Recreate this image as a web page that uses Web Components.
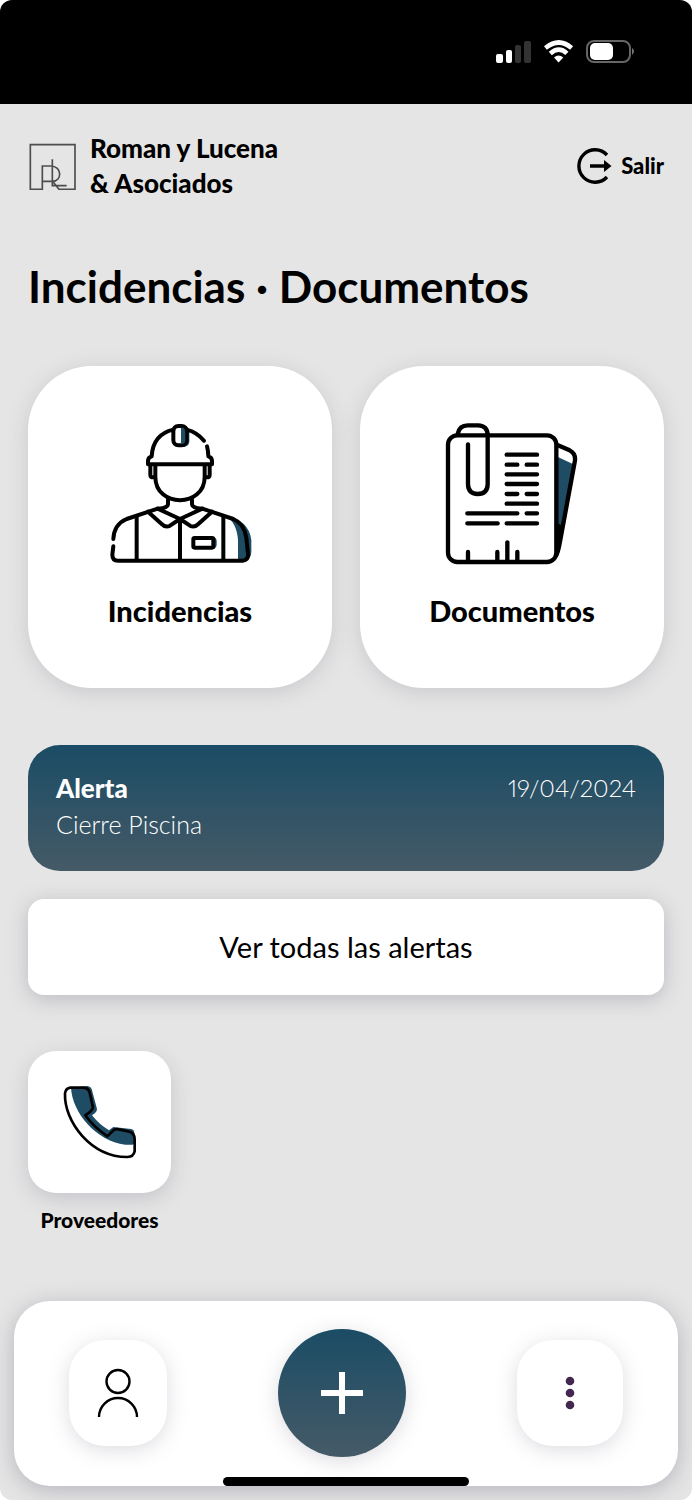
<!DOCTYPE html>
<html lang="es">
<head>
<meta charset="utf-8">
<meta name="viewport" content="width=device-width, initial-scale=1">
<title>Roman y Lucena &amp; Asociados</title>
<style>
  body { margin: 0; background: #fff; color: #000; font-family: Lato, "Open Sans", sans-serif; }
</style>
</head>
<body>
<app-screen>
  <status-bar slot="status"></status-bar>
  <brand-header>Roman y Lucena<br>&amp; Asociados</brand-header>
  <page-title>Incidencias · Documentos</page-title>
  <card-grid>
    <feature-card icon="worker">Incidencias</feature-card>
    <feature-card icon="papers">Documentos</feature-card>
  </card-grid>
  <alert-banner>
    <span slot="title">Alerta</span>
    <span slot="date">19/04/2024</span>
    <span slot="text">Cierre Piscina</span>
  </alert-banner>
  <wide-button>Ver todas las alertas</wide-button>
  <shortcut-tile>Proveedores</shortcut-tile>
  <bottom-nav slot="nav"></bottom-nav>
</app-screen>

<script>
const icons = {
  worker: `<svg viewBox="51 36 438 432" width="146" height="144" fill="none" stroke="#000" stroke-width="12" stroke-linecap="round" stroke-linejoin="round" aria-hidden="true">
    <path d="M403 315Q440 335 444 390V448H468Q484 445 484 425V390Q477 330 403 315Z" fill="#1d4c64" stroke="none"/>
    <path d="M270 49H284Q298 51 298 65V94Q298 108 284 110H270Z" fill="#1d4c64" stroke="none"/>
    <rect x="250" y="48" width="40" height="58" rx="15" fill="#fff"/>
    <path d="M273 53H280Q286 57 286 66V90Q286 99 278 102H273Z" fill="#1d4c64" stroke="none"/>
    <path d="M250 59Q189 73 185 139Q174 142 174 153V163H366V153Q366 142 355 139Q355 124 351 109M290 59Q321 67 342 92"/>
    <path d="M181 166V194Q181 202 190 202H196M359 166V194Q359 202 350 202H344M196 166V200C196 294 344 294 344 200V166"/>
    <path d="M234 269V283Q233 291 217 295L203 296L110 327Q72 343 70 387M70 409L67 434Q67 452 84 452H458Q476 450 474 432L469 384Q463 341 430 327L337 296L323 295Q307 291 306 283V269"/>
    <path d="M174 305L215 342Q227 354 240 347L270 327L203 296M366 305L325 342Q313 354 300 347L270 327L337 296M270 330V450M140 322V450M400 322V450"/>
    <path d="M366 381H371Q380 384 380 394V404Q379 416 366 417Z" fill="#1d4c64" stroke="none"/>
    <rect x="310" y="384" width="60" height="29" rx="4"/>
  </svg>`,
  papers: `<svg viewBox="60 36 432 432" width="144" height="144" fill="none" stroke="#000" stroke-width="13" stroke-linecap="round" stroke-linejoin="round" aria-hidden="true">
    <path d="M412 140L460 163L420 390L410 414Z" fill="#1d4c64" stroke="none"/>
    <path d="M412 105L449 121Q467 130 465 151L419 400Q414 427 408 437M411 346L418 350"/>
    <path d="M411 345L425 349L410 446Z" fill="#000" stroke="none"/>
    <rect x="84" y="76" width="325" height="380" rx="28"/>
    <path d="M113 72Q118 46 143 46H174Q203 47 203 76V222Q203 252 173 252Q144 251 144 222V103"/>
    <path d="M260 134H351M260 164H292M320 164H351M260 193H351M260 222H351M260 252H292M320 252H351M260 281H351M142 310H292M320 310H351M142 340H233M260 340H351M144 426V451M232 426V451M262 397V451M292 426V451"/>
  </svg>`
};

function define(name, css, html, setup) {
  const template = document.createElement('template');
  template.innerHTML = `<style>*{box-sizing:border-box}button,a{font:inherit;color:inherit;text-decoration:none;cursor:pointer}button{border:0;padding:0}svg{display:block;flex:none}${css}</style>${html}`;
  customElements.define(name, class extends HTMLElement {
    constructor() {
      super();
      this.attachShadow({ mode: 'open' }).append(template.content.cloneNode(true));
    }
    connectedCallback() { if (setup) setup(this); }
  });
}

define('app-screen', `
  :host{display:flex;flex-direction:column;min-height:100vh;background:#e5e5e5;border-radius:12px;overflow:hidden}
  main{display:flex;flex-direction:column;padding:0 28px 24px}
  footer{margin-top:auto;padding:0 14px 14px}
`, `<slot name="status"></slot><main><slot></slot></main><footer><slot name="nav"></slot></footer>`);

define('status-bar', `
  :host{display:flex;justify-content:flex-end;align-items:center;box-sizing:border-box;gap:12px;height:104px;padding:0 56px 2px;background:#000}
`, `
  <svg width="36" height="24" viewBox="0 0 36 24" aria-label="Cobertura"><g fill="#fff"><rect y="15" width="7" height="9" rx="2"/><rect x="10" y="11" width="6" height="13" rx="2"/></g><g fill="#333"><rect x="19" y="6" width="6" height="18" rx="2"/><rect x="28" y="2" width="7" height="22" rx="2"/></g></svg>
  <svg width="30" height="24" viewBox="0 0 30 24" fill="none" stroke="#fff" stroke-width="4.6" aria-label="Wi-Fi"><path d="M1.4 9Q15-2 27.6 9M6.3 14.4Q15 6.9 22.9 14.4"/><path d="M10 18.5Q14.5 14.5 19.3 18.5L14.6 23.5Z" fill="#fff" stroke="none"/></svg>
  <svg width="50" height="24" viewBox="0 0 50 24" aria-label="Batería"><rect x="1" y="2" width="43" height="21" rx="7" fill="none" stroke="#666" stroke-width="2"/><rect x="4" y="4" width="23" height="17" rx="5" fill="#fff"/><path d="M46 9Q50 12 46 16Z" fill="#777"/></svg>
`);

define('brand-header', `
  :host{display:flex;align-items:center;justify-content:space-between;padding-top:27px}
  .brand{display:flex;align-items:center;gap:14px;font-size:26px;line-height:35px;font-weight:900}
  button{display:flex;align-items:center;gap:9px;background:none;font-size:22px;line-height:28px;font-weight:900}
`, `
  <div class="brand">
    <svg width="48" height="48" viewBox="84 67 144 144" fill="none" stroke="#4d4d4d" stroke-width="5" aria-hidden="true"><path d="M128 209H91V75H225V209H177L158 185H126M127 211V139H152C187 139 187 185 157 185M157 119V198H200"/></svg>
    <span><slot></slot></span>
  </div>
  <button type="button">
    <svg width="36" height="36" viewBox="0 0 36 36" fill="none" stroke="#000" stroke-width="3.4" aria-hidden="true"><path d="M31 7A16.2 16.2 0 1 0 31 29M14 18H29"/><path d="M28 12L35.5 18L28 24Z" fill="#000" stroke="none"/></svg>
    Salir
  </button>
`);

define('page-title', `
  :host{display:block;padding:57px 0 52px}
  h1{margin:0;font-size:44px;line-height:56px;font-weight:700}
`, `<h1><slot></slot></h1>`);

define('card-grid', `
  :host{display:grid;grid-template-columns:1fr 1fr;gap:28px}
`, `<slot></slot>`);

define('feature-card', `
  :host{display:block}
  a{display:flex;flex-direction:column;align-items:center;gap:25px;height:322px;padding-top:56px;background:#fff;border-radius:64px;box-shadow:0 4px 20px #78788c40;font-size:29px;line-height:40px;font-weight:900}
`, `<a href="#"><span class="icon"></span><slot></slot></a>`, el => {
  el.shadowRoot.querySelector('.icon').innerHTML = icons[el.getAttribute('icon')];
  el.shadowRoot.querySelector('a').href = '#' + el.getAttribute('icon');
});

define('alert-banner', `
  :host{display:grid;grid-template-columns:1fr auto;margin-top:57px;padding:25px 28px 29px;border-radius:32px;background:linear-gradient(#1b4c65,#455a67);color:#fff;font-size:25px;line-height:36px;font-weight:300}
  strong{font-size:26px;font-weight:900}
  .date{font-size:24px;font-variant-numeric:proportional-nums}
`, `<strong><slot name="title"></slot></strong><span class="date"><slot name="date"></slot></span><span><slot name="text"></slot></span>`);

define('wide-button', `
  :host{display:block;margin-top:28px}
  button{display:block;width:100%;height:96px;background:#fff;border-radius:16px;box-shadow:0 4px 20px #78788c60;font-size:29px;line-height:40px}
`, `<button type="button"><slot></slot></button>`);

define('shortcut-tile', `
  :host{display:block;width:143px;margin-top:56px}
  a{display:flex;flex-direction:column;align-items:center;gap:13px;font-size:21px;line-height:28px;font-weight:900}
  .tile{display:grid;place-items:center;width:100%;height:142px;background:#fff;border-radius:28px;box-shadow:0 6px 20px #78788c48}
`, `<a href="#proveedores"><span class="tile">
  <svg width="76" height="76" viewBox="126 132 228 228" stroke-linejoin="round" aria-hidden="true"><path d="M153 144L203 138Q212 139 215 147L231 207Q231 217 216 226Q238 254 267 271L280 261L333 267Q344 269 343 282L345 311Q336 316 316 314C227 303 157 217 153 144Z" fill="#1d4c64"/><path d="M151 143H191Q207 144 210 162L219 202Q218 211 196 226Q221 261 262 289L278 273Q285 266 295 268L325 274Q344 278 344 298V334Q340 352 321 351C213 350 132 246 135 160Q137 145 151 143Z" fill="none" stroke="#000" stroke-width="8"/></svg>
</span><slot></slot></a>`);

define('bottom-nav', `
  :host{display:block;position:relative}
  nav{display:flex;align-items:center;justify-content:space-between;box-sizing:border-box;height:185px;padding:0 55px 1px;background:#fff;border-radius:36px;box-shadow:0 4px 22px #78788c70}
  button{display:grid;place-items:center;height:106px;border-radius:36px;background:#fff;box-shadow:0 4px 20px #78788c40}
  .user{width:98px}
  .more{width:106px}
  .add{width:128px;height:128px;border-radius:50%;background:linear-gradient(#1b4c65,#455a67)}
  .home{position:absolute;bottom:0;left:50%;width:246px;height:9px;margin-left:-123px;border-radius:5px;background:#000}
`, `<nav aria-label="Principal">
  <button class="user" type="button" aria-label="Perfil"><svg width="42" height="50" viewBox="0 0 42 50" fill="none" stroke="#000" stroke-width="2.4"><circle cx="21" cy="13.5" r="11.5"/><path d="M2 49A19 19 0 0 1 40 49"/></svg></button>
  <button class="add" type="button" aria-label="Añadir"><svg width="44" height="44" viewBox="0 0 44 44" stroke="#fff" stroke-width="6"><path d="M22 1V43M1 22H43"/></svg></button>
  <button class="more" type="button" aria-label="Más"><svg width="10" height="34" viewBox="0 0 10 34" fill="#432750"><circle cx="5" cy="5" r="4.3"/><circle cx="5" cy="17" r="4.3"/><circle cx="5" cy="29" r="4.3"/></svg></button>
</nav><div class="home"></div>`);
</script>
</body>
</html>
